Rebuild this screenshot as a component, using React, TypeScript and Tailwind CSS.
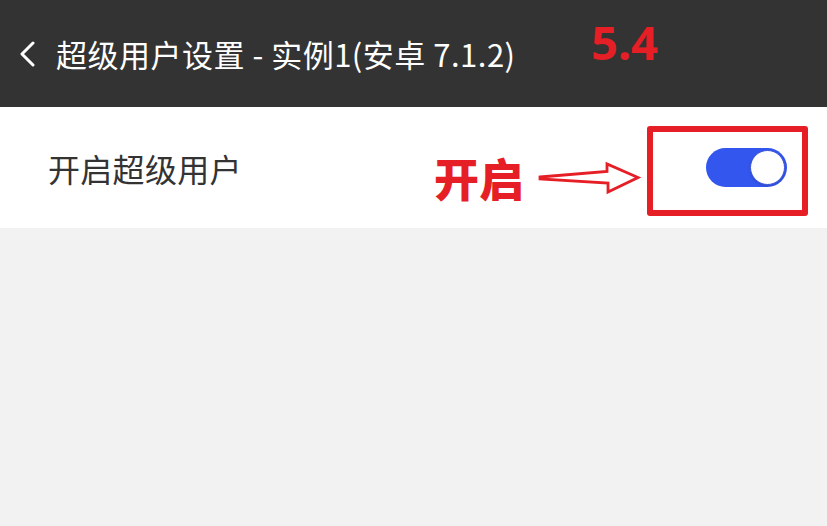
const cjk = { fontFamily: '"Noto Sans CJK SC", "Noto Sans", sans-serif' };

function Toggle({ on }: { on: boolean }) {
  return (
    <div className={`w-[81px] h-[39px] rounded-full p-[2px] flex items-center ${on ? 'bg-[#3356ee] justify-end' : 'bg-gray-300 justify-start'}`}>
      <div className="w-[35px] h-[35px] rounded-full bg-white border border-[#3a55d8] shadow-[0_1px_2px_rgba(0,0,0,0.15)]" />
    </div>
  );
}

function HollowArrow() {
  return (
    <svg width="104" height="36" viewBox="0 0 104 36" fill="none">
      <path
        d="M2 16 L69 10.5 L69 3 L100 16.5 L70 31 L70 22 L2 18 Z"
        stroke="#e61e25"
        strokeWidth="2.8"
        strokeLinejoin="miter"
        fill="white"
      />
    </svg>
  );
}

export default function App() {
  return (
    <div className="relative w-[827px] h-[526px] bg-[#f2f2f2] overflow-hidden" style={cjk}>
      <header className="h-[107px] bg-[#333333] flex items-center pl-[19px] text-white">
        <svg width="18" height="26" viewBox="0 0 18 26" fill="none">
          <path d="M14 2 L3 13 L14 24" stroke="white" strokeWidth="3" strokeLinecap="round" strokeLinejoin="round" />
        </svg>
        <h1 className="ml-[19px] text-[31px] leading-none tracking-[0.5px]">超级用户设置 - 实例1(安卓 7.1.2)</h1>
      </header>

      <div className="h-[121px] bg-white flex items-center justify-between pl-[48px] pr-[40px]">
        <span className="text-[32px] text-[#333333] tracking-[0.3px]">开启超级用户</span>
        <Toggle on />
      </div>

      {/* annotations */}
      <span
        className="absolute left-[591px] top-[12px] text-[47px] font-bold leading-[60px] text-[#e61e25]"
        style={{ fontFamily: '"Noto Sans", "Liberation Sans", sans-serif' }}
      >
        5.4
      </span>
      <div className="absolute left-[434px] top-[150px] flex items-center">
        <span className="text-[45px] font-black leading-[56px] text-[#e61e25]">开启</span>
        <div className="ml-[14px] mt-[2px]">
          <HollowArrow />
        </div>
      </div>
      <div className="absolute left-[647px] top-[126px] w-[161px] h-[90px] border-[6px] border-[#e61e25] rounded-[3px]" />
    </div>
  );
}
